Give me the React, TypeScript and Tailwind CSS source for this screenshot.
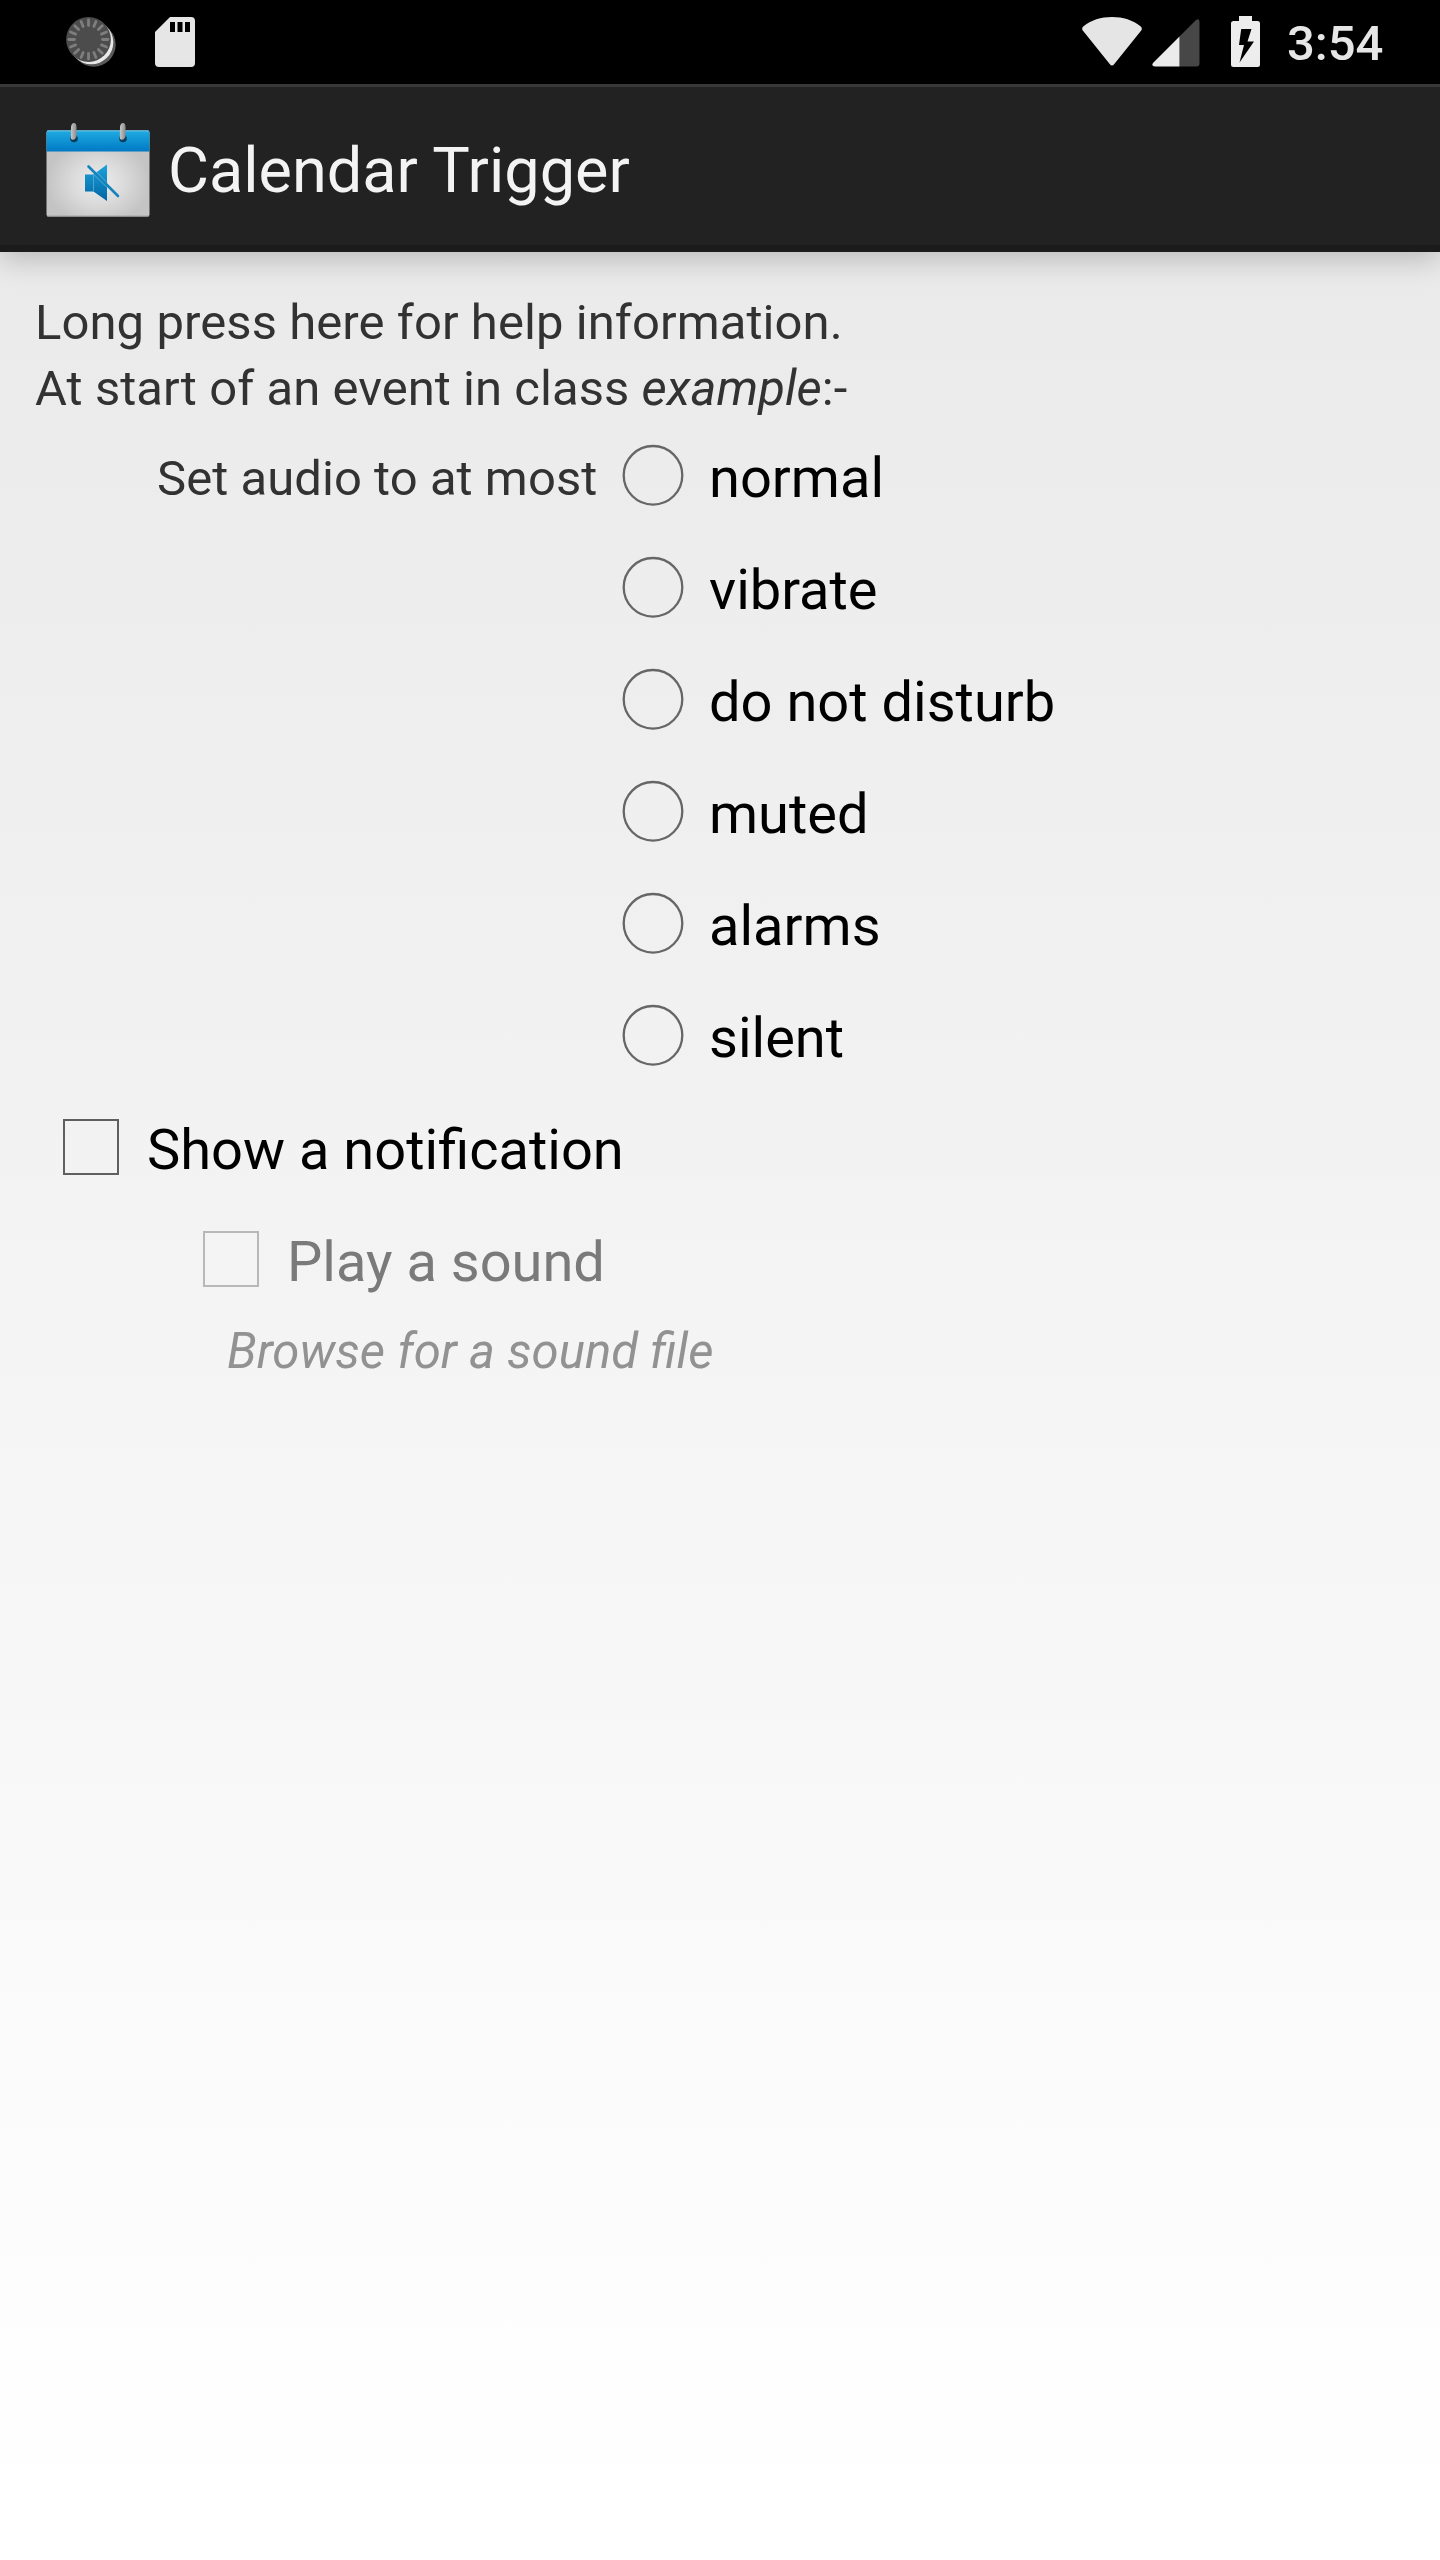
import { useState } from "react";

const audioModes = ["normal", "vibrate", "do not disturb", "muted", "alarms", "silent"];

function AlarmDiscIcon() {
  const ticks = Array.from({ length: 16 }, (_, i) => i * 22.5);
  return (
    <svg className="h-[52px] w-[52px]" viewBox="0 0 52 52">
      <circle cx="27.700" cy="27.700" r="22" fill="#5a5a5a" />
      <circle cx="25.300" cy="25.300" r="22" fill="#e8e8e8" />
      <circle cx="22.500" cy="22.500" r="22.400" fill="#4c4c4c" />
      {ticks.map((a) => (
        <line key={a} x1="22.5" y1="8.500" x2="22.5" y2="3" stroke="#7e7e7e" strokeWidth="2.8" strokeLinecap="round" transform={`rotate(${a} 22.5 22.5)`} />
      ))}
    </svg>
  );
}

function SdCardIcon() {
  return (
    <svg className="h-[50px] w-10" viewBox="0 0 40 50">
      <path d="M15 0H36a4 4 0 0 1 4 4V46a4 4 0 0 1-4 4H4a4 4 0 0 1-4-4V15Z" fill="#e6e6e6" />
      <path d="M15 5h5v10h-5zM22.5 5h5v10h-5zM30 5h5v10h-5z" fill="#000" />
    </svg>
  );
}

function WifiIcon() {
  return (
    <svg className="h-[49px] w-[60px]" viewBox="0 0 60 49">
      <path d="M1.2 9.5C9 3 19 0 30 0s21 3 28.800 9.500q1.800 1.800.4 4L32.300 47q-2.300 3-4.600 0L.8 13.500q-1.400-2.200.4-4Z" fill="#e5e5e5" />
    </svg>
  );
}

function SignalIcon() {
  return (
    <svg className="h-[48px] w-[48px]" viewBox="0 0 48 48">
      <path d="M27.500 17.500 43.500 1.500Q47.500-1.500 47.500 3V44.500q0 3-3 3H27.500Z" fill="#474747" />
      <path d="M27.500 17.500V47.500H3Q-1 47 1 44Z" fill="#ebebeb" />
    </svg>
  );
}

function BatteryIcon() {
  return (
    <svg className="h-[51px] w-[29px]" viewBox="0 0 29 51">
      <path d="M8 0H21V5H26.500A2.500 2.500 0 0 1 29 7.500V48.500A2.500 2.500 0 0 1 26.500 51H2.500A2.500 2.500 0 0 1 0 48.500V7.500A2.500 2.500 0 0 1 2.500 5H8Z" fill="#ededed" />
      <path d="M10.200 13H20.500L16.500 25.500H23L8.500 46.500L13 29H8Z" fill="#000" />
    </svg>
  );
}

function CalendarIcon() {
  return (
    <svg className="h-28 w-28" viewBox="0 0 112 112">
      <defs>
        <radialGradient id="page" cx=".5" cy=".6" r=".5">
          <stop offset="0" stopColor="#ededed" />
          <stop offset=".5" stopColor="#dbdbdb" />
          <stop offset="1" stopColor="#c4c4c4" />
        </radialGradient>
        <linearGradient id="band" x2="0" y2="1">
          <stop offset="0" stopColor="#1fabe2" />
          <stop offset="1" stopColor="#0079c4" />
        </linearGradient>
        <linearGradient id="speaker" x2="0" y2="1">
          <stop offset="0" stopColor="#1ba3dc" />
          <stop offset="1" stopColor="#0265a3" />
        </linearGradient>
        <linearGradient id="ring" x2="1" y2="0">
          <stop offset="0" stopColor="#c8c8c8" />
          <stop offset="1" stopColor="#8a8a8a" />
        </linearGradient>
      </defs>
      <rect x="4.500" y="16.500" width="103" height="86" rx="2" fill="url(#page)" />
      <path d="M4.500 37.500V18.500a2 2 0 0 1 2-2H105.500a2 2 0 0 1 2 2V37.500Z" fill="url(#band)" />
      <path d="M5 17H107" stroke="#6fc0e0" strokeWidth="1" />
      <path d="M5 102H107" stroke="#a5a5a5" strokeWidth="1.200" />
      <circle cx="32" cy="24.500" r="3.800" fill="#0c3e5c" />
      <circle cx="81" cy="24.500" r="3.800" fill="#0c3e5c" />
      <path d="M28.800 24.500 29 13q.5-4 3-4t2.500 4V20a3.500 4.500 0 0 1-5.700 4.500Z" fill="url(#ring)" />
      <path d="M77.800 24.500 78 13q.5-4 3-4t2.500 4V20a3.500 4.500 0 0 1-5.700 4.500Z" fill="url(#ring)" />
      <path d="M43 60.500h8.500v17H43zM51.500 60.500 65 50.500V87L51.500 77.500Z" fill="url(#speaker)" />
      <path d="M51.500 60.500V77.500" stroke="#4fa3cf" strokeWidth="1" />
      <path d="M46.500 52.500 76 82" stroke="#1584bd" strokeWidth="2.600" strokeLinecap="round" />
      <path d="M52 60.500 65 73.500M54 57.500 65 68.500" stroke="#6bb2d8" strokeWidth=".8" />
    </svg>
  );
}

function Checkbox({ label, disabled = false }: { label: string; disabled?: boolean }) {
  return (
    <label className={`flex h-28 items-center ${disabled ? "text-[#7a7a7a]" : "text-black"}`}>
      <span className={`mb-[6px] size-14 shrink-0 border-2 ${disabled ? "border-[#b8b8b8]" : "border-[#5f5f5f]"}`} />
      <span className="ml-[28px] whitespace-nowrap text-[56px] leading-[66px]">{label}</span>
    </label>
  );
}

export default function App() {
  const [mode, setMode] = useState<string | null>(null);
  return (
    <div className="flex h-[2560px] w-[1440px] flex-col overflow-hidden bg-linear-to-b from-[#e8e8e8] to-white to-98% font-['Roboto',sans-serif] text-[49px] leading-[66px] text-[#323232]">
      <header className="flex h-[84px] shrink-0 items-start bg-black">
        <div className="ml-[66px] mt-[17px] flex gap-[37px]">
          <AlarmDiscIcon />
          <SdCardIcon />
        </div>
        <div className="ml-[887px] mt-4 flex">
          <div className="mt-px"><WifiIcon /></div>
          <div className="ml-[10px] mt-[3px]"><SignalIcon /></div>
          <div className="ml-[31px]"><BatteryIcon /></div>
        </div>
        <span className="ml-[27px] mt-[11px] text-[49px] leading-[66px] font-medium text-[#e6e6e6]">3:54</span>
      </header>
      <div className="relative flex h-[168px] shrink-0 items-center border-t-[3px] border-b-[7px] border-t-[#383838] border-b-[#1b1b1b] bg-[#222] pt-2 pl-[42px] shadow-[0_7px_28px_rgba(0,0,0,0.22)]">
        <CalendarIcon />
        <h1 className="mt-px ml-[14px] text-[63px] leading-[74px] text-[#f3f3f3]">Calendar Trigger</h1>
      </div>
      <main className="flex flex-col px-[35px] pt-[38px]">
        <p className="tracking-[0.07px]">Long press here for help information.</p>
        <p className="tracking-[0.05px]">At start of an event in class <em>example</em>:-</p>
        <div className="flex">
          <span className="ml-[122px] flex h-28 w-[466px] shrink-0 items-center pt-px whitespace-nowrap tracking-[0.05px]">Set audio to at most</span>
          <div className="flex flex-col">
            {audioModes.map((m) => (
              <button key={m} type="button" onClick={() => setMode(m)} className="flex h-28 items-center text-black">
                <svg className="mb-[6px] size-[60px] shrink-0 overflow-visible" viewBox="0 0 60 60">
                  <circle cx="30" cy="30.300" r="29.300" fill="none" stroke="#666" strokeWidth="2.300" />
                  {mode === m && <circle cx="30" cy="30.300" r="15" fill="#666" />}
                </svg>
                <span className="ml-[26px] whitespace-nowrap text-[56px] leading-[66px]">{m}</span>
              </button>
            ))}
          </div>
        </div>
        <div className="ml-[28px]"><Checkbox label="Show a notification" /></div>
        <div className="ml-[168px]"><Checkbox label="Play a sound" disabled /></div>
        <p className="ml-[192px] text-[49.1px] text-[#929292] italic">Browse for a sound file</p>
      </main>
    </div>
  );
}
